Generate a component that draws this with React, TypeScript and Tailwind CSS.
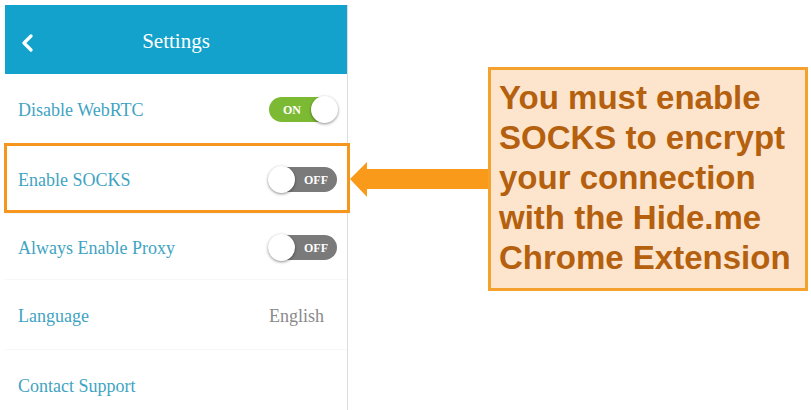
const serif = { fontFamily: '"Liberation Serif", "Times New Roman", serif' };

function Toggle({ on }: { on: boolean }) {
  return (
    <div
      className={`relative mt-[2px] flex h-[25px] w-[68px] items-center rounded-full ${on ? "bg-[#7dba34] justify-start pl-[14px]" : "bg-[#7a7a7a] justify-end pr-[9px]"}`}
    >
      <span className="text-[12px] font-bold leading-none text-white" style={serif}>
        {on ? "ON" : "OFF"}
      </span>
      <div
        className={`absolute top-[-1px] h-[27px] w-[27px] rounded-full bg-white shadow-[0_1px_3px_rgba(0,0,0,0.45)] ${on ? "right-[-1px]" : "left-[-1px]"}`}
      />
    </div>
  );
}

function Row({ label, h, children }: { label: string; h: string; children?: React.ReactNode }) {
  return (
    <div className={`flex items-center justify-between border-b border-[#f7f7f7] pl-[13px] pr-[10px] ${h}`}>
      <span className="pt-[4px] text-[18px] text-[#3fa4c2]" style={serif}>
        {label}
      </span>
      {children}
    </div>
  );
}

export default function App() {
  return (
    <div className="relative flex h-[410px] w-[811px] items-start overflow-hidden bg-white">
      <div className="ml-[5px] mt-[5px] w-[343px] shrink-0 border-r border-[#dcdcdc]">
        <div className="relative flex h-[69px] items-center justify-center bg-[#12a2cb]">
          <svg className="absolute left-[15px] top-[29px]" width="16" height="18" viewBox="0 0 16 18">
            <path d="M11 2 L4 9 L11 16" fill="none" stroke="white" strokeWidth="3.2" strokeLinecap="round" strokeLinejoin="round" />
          </svg>
          <span className="pt-[4px] text-[21px] text-white" style={serif}>
            Settings
          </span>
        </div>
        <Row label="Disable WebRTC" h="h-[70px]">
          <Toggle on />
        </Row>
        <Row label="Enable SOCKS" h="h-[70px]">
          <Toggle on={false} />
        </Row>
        <Row label="Always Enable Proxy" h="h-[66px]">
          <Toggle on={false} />
        </Row>
        <Row label="Language" h="h-[70px]">
          <span className="pr-[13px] pt-[4px] text-[18px] text-[#8a8a8a]" style={serif}>
            English
          </span>
        </Row>
        <Row label="Contact Support" h="h-[70px]" />
      </div>

      <div className="absolute left-[4px] top-[143px] h-[70px] w-[346px] border-[3px] border-[#f7961f]" />

      <svg className="ml-[2px] mt-[162px] shrink-0" width="138" height="36" viewBox="0 0 138 36">
        <path d="M0 17 L17 0 L17 7 L138 7 L138 27 L17 27 L17 35 Z" fill="#f99a1b" />
      </svg>

      <div
        className="mt-[67px] h-[224px] w-[320px] shrink-0 border-[3px] border-[#f5a12e] bg-[#fde5cd] pl-[8px] pt-[8px]"
        style={{ fontFamily: '"Liberation Sans", Arial, sans-serif' }}
      >
        <p className="text-[33px] font-bold leading-[40px] text-[#b4600e]">
          You must enable
          <br />
          SOCKS to encrypt
          <br />
          your connection
          <br />
          with the Hide.me
          <br />
          Chrome Extension
        </p>
      </div>
    </div>
  );
}
